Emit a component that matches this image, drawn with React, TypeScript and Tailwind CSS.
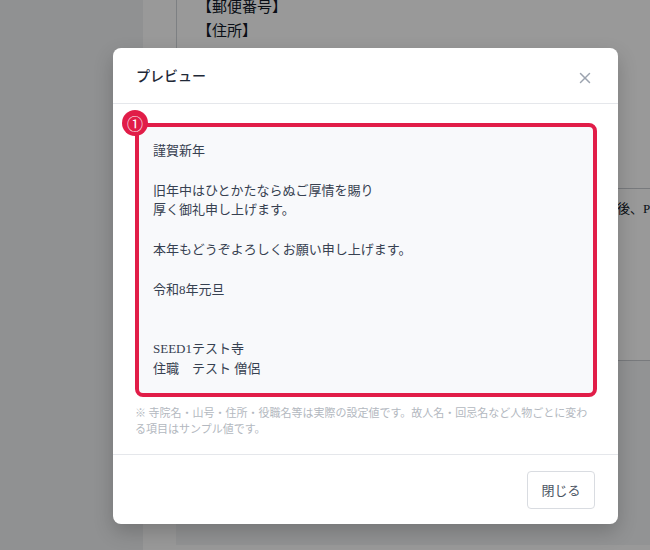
import { X } from 'lucide-react';

const bodyLines = [
  '謹賀新年',
  '',
  '旧年中はひとかたならぬご厚情を賜り',
  '厚く御礼申し上げます。',
  '',
  '本年もどうぞよろしくお願い申し上げます。',
  '',
  '令和8年元旦',
  '',
  '',
  'SEED1テスト寺',
  '住職　テスト 僧侶',
];

function BackgroundPage() {
  return (
    <div className="flex h-[550px] w-[650px] overflow-hidden bg-[#f4f5f7]">
      <div className="w-[143px] shrink-0 bg-[#f1f2f4]" />
      <div className="flex-1 bg-white pl-[33px]">
        <div className="h-[365px] border-l border-[#d1d5db] pl-[20px] text-[15px] leading-[24px] text-[#111827] [font-family:'Liberation_Serif','Noto_Sans_CJK_JP',serif]">
          <div className="-mt-[5px]">【郵便番号】</div>
          <div>【住所】</div>
          <div className="mt-[145px] border-t border-[#c9ccd1] pt-[8px] pl-[420px] text-[13px] whitespace-nowrap">後、Pl</div>
        </div>
        <div className="h-[185px] border-t border-[#c9ccd1] bg-[#f4f5f7]" />
      </div>
    </div>
  );
}

export default function App() {
  return (
    <div className="relative h-[550px] w-[650px] overflow-hidden [font-family:'Noto_Sans_CJK_JP','Noto_Sans',sans-serif]">
      <BackgroundPage />
      <div className="absolute inset-0 bg-black/40 pl-[113px] pt-[48px]">
        <div className="flex h-[476px] w-[505px] flex-col rounded-lg bg-white shadow-[0_8px_20px_rgba(0,0,0,0.2)]">
          <div className="flex h-[56px] shrink-0 items-center justify-between border-b border-[#e5e7eb] pl-[23px] pr-[24px]">
            <h2 className="text-[14px] font-medium text-[#1f2937]">プレビュー</h2>
            <X size={18} strokeWidth={2} className="mt-[5px] text-[#9ca3af]" />
          </div>

          <div className="flex-1 px-[22px] pt-[19px]">
            <div className="relative h-[274px] w-[462px] rounded-lg border-4 border-[#e11d48] bg-[#f8f9fb] pl-[14px] pt-[14px]">
              <span className="absolute -left-[17px] -top-[17px] flex h-[26px] w-[26px] items-center justify-center rounded-full bg-[#e11d48] text-[16px] leading-none text-white">
                ①
              </span>
              <div className="text-[13px] leading-[19.8px] text-[#374151] [font-family:'Liberation_Serif','Noto_Sans_CJK_JP',serif]">
                {bodyLines.map((line, i) => (
                  <div key={i} className="h-[19.8px] whitespace-pre">{line}</div>
                ))}
              </div>
            </div>
            <p className="mt-[7px] text-[11px] leading-[16px] text-[#b3b8c0]">
              ※ 寺院名・山号・住所・役職名等は実際の設定値です。故人名・回忌名など人物ごとに変わる項目はサンプル値です。
            </p>
          </div>

          <div className="flex h-[70px] shrink-0 items-start justify-end border-t border-[#e5e7eb] pr-[23px] pt-[16px]">
            <button className="h-[38px] w-[68px] rounded border border-[#d9dce1] bg-white text-[13px] text-[#4b5563]">閉じる</button>
          </div>
        </div>
      </div>
    </div>
  );
}
